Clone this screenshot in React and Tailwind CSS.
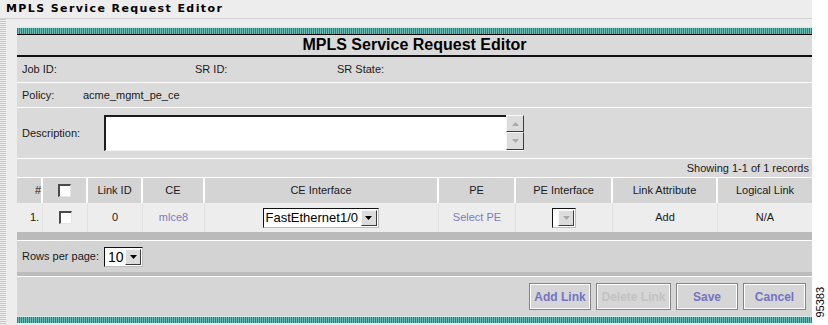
import React from "react";

function Tri({ color = "#000", up = false }) {
  return (
    <svg width="7" height="4" viewBox="0 0 7 4">
      {up ? <path d="M0 4 L3.5 0 L7 4 Z" fill={color} /> : <path d="M0 0 L7 0 L3.5 4 Z" fill={color} />}
    </svg>
  );
}

function ArrowBtn({ disabled = false, up = false, w = "w-[16px]" }) {
  return (
    <div className={`${w} h-full bg-[#dcdcdc] border-t border-l border-t-[#f8f8f8] border-l-[#f8f8f8] border-b border-r border-b-[#3c3c3c] border-r-[#3c3c3c] flex items-center justify-center`}>
      <Tri color={disabled ? "#a9a9a9" : "#000"} up={up} />
    </div>
  );
}

function Check() {
  return (
    <div className="w-[13px] h-[13px] bg-white border-t-2 border-l-2 border-t-[#4a4a4a] border-l-[#4a4a4a] border-b border-r border-b-[#e6e6e6] border-r-[#e6e6e6]" />
  );
}

function Btn({ children, w, disabled = false }) {
  return (
    <div
      className={`${w} h-[27px] border border-[#858585] shadow-[inset_1px_1px_0_#ffffff,inset_-1px_-1px_0_#ffffff] bg-[#d6d6d6] flex items-center justify-center font-bold text-[12px] ${disabled ? "text-[#c2c2c2]" : "text-[#7474c4]"}`}
    >
      {children}
    </div>
  );
}

const cols = "grid grid-cols-[26px_45px_55px_62px_234px_77px_97px_105px_94px]";

export default function App() {
  return (
    <div className="w-[828px] h-[325px] flex bg-white overflow-hidden font-['Liberation_Sans',Arial,sans-serif] text-[11px] text-[#1a1a1a]">
      <div className="w-[812px] h-full bg-[#ededed] flex flex-col">
        <div className="h-[18px] shrink-0 flex items-center pl-[6px] pb-[2px]">
          <span className="font-['DejaVu_Sans',Verdana,sans-serif] font-bold text-[11px] tracking-[1.4px] text-black leading-none">
            MPLS Service Request Editor
          </span>
        </div>
        <div className="h-[1px] shrink-0 bg-[#d2d2d2]" />
        <div className="flex flex-1">
          <div className="w-[6px] bg-[image:repeating-linear-gradient(180deg,#c6c6c6_0_1px,#efefef_1px_2px)]" />
          <div className="ml-[11px] w-[795px] pt-[8px] flex flex-col">
            <div className="h-[1px] bg-[#cfeae7]" />
            <div className="h-[6px] bg-[image:repeating-linear-gradient(90deg,#23857f_0_1px,#6bbab4_1px_2px)]" />
            <div className="h-[1px] bg-black" />
            <div className="h-[20px] bg-[#dadada] flex items-center justify-center text-[16px] font-bold text-black">
              MPLS Service Request Editor
            </div>
            <div className="h-[2px] bg-[#111]" />
            {/* Job row */}
            <div className="h-[25px] bg-[#dadada] grid grid-cols-[173px_142px_1fr] items-center pl-[5px]">
              <span>Job ID:</span>
              <span>SR ID:</span>
              <span>SR State:</span>
            </div>
            <div className="h-[1px] bg-white" />
            {/* Policy */}
            <div className="h-[24px] bg-[#dadada] grid grid-cols-[61px_1fr] items-center pl-[5px]">
              <span>Policy:</span>
              <span>acme_mgmt_pe_ce</span>
            </div>
            <div className="h-[1px] bg-white" />
            {/* Description */}
            <div className="h-[50px] bg-[#dadada] flex items-center pl-[5px]">
              <span className="w-[82px]">Description:</span>
              <div className="flex h-[36px]">
                <div className="w-[402px] h-full bg-white border-t-2 border-l-2 border-t-[#1c1c1c] border-l-[#1c1c1c] border-b border-b-[#f2f2f2]" />
                <div className="w-[18px] h-full flex flex-col bg-white">
                  <div className="h-[17px]"><ArrowBtn disabled up w="w-[18px]" /></div>
                  <div className="h-[18px]"><ArrowBtn disabled w="w-[18px]" /></div>
                </div>
              </div>
            </div>
            <div className="h-[1px] bg-white" />
            {/* Showing */}
            <div className="h-[18px] bg-[#dadada] flex items-center justify-end pr-[3px]">
              Showing 1-1 of 1 records
            </div>
            <div className="h-[1px] bg-white" />
            {/* Table header */}
            <div className={`${cols} h-[25px] bg-[#d4d4d4]`}>
              <div className="flex items-center pl-[18px] border-r-2 border-white">#</div>
              <div className="flex items-center justify-center border-r-2 border-white"><Check /></div>
              <div className="flex items-center justify-center border-r-2 border-white">Link ID</div>
              <div className="flex items-center justify-center border-r-2 border-white">CE</div>
              <div className="flex items-center justify-center border-r-2 border-white">CE Interface</div>
              <div className="flex items-center justify-center border-r-2 border-white">PE</div>
              <div className="flex items-center justify-center border-r-2 border-white">PE Interface</div>
              <div className="flex items-center justify-center border-r-2 border-white">Link Attribute</div>
              <div className="flex items-center justify-center">Logical Link</div>
            </div>
            {/* Data row */}
            <div className={`${cols} h-[29px] bg-[#ededed]`}>
              <div className="flex items-center pl-[13px] border-r border-[#e2e2e2]">1.</div>
              <div className="flex items-center justify-center border-r border-[#e2e2e2]"><Check /></div>
              <div className="flex items-center justify-center border-r border-[#e2e2e2]">0</div>
              <div className="flex items-center justify-center border-r border-[#e2e2e2] text-[#7b7bc0]">mlce8</div>
              <div className="flex items-center justify-center border-r border-[#e2e2e2]">
                <div className="w-[116px] h-[20px] ml-[-2px] bg-white border-t border-l border-t-[#111] border-l-[#111] border-b border-r border-b-[#bdbdbd] border-r-[#bdbdbd] flex">
                  <span className="flex-1 text-[13px] text-black leading-[18px] pl-[2px]">FastEthernet1/0</span>
                  <div className="py-[1px] pr-[1px]"><ArrowBtn /></div>
                </div>
              </div>
              <div className="flex items-center justify-center border-r border-[#e2e2e2] text-[#7b7bc0]">Select PE</div>
              <div className="flex items-center justify-center border-r border-[#e2e2e2]">
                <div className="w-[24px] h-[20px] bg-white border-t border-l border-t-[#111] border-l-[#111] border-b border-r border-b-[#bdbdbd] border-r-[#bdbdbd] flex justify-end">
                  <div className="py-[1px] pr-[1px]"><ArrowBtn disabled /></div>
                </div>
              </div>
              <div className="flex items-center justify-center border-r border-[#e2e2e2]">Add</div>
              <div className="flex items-center justify-center">N/A</div>
            </div>
            <div className="h-[8px] bg-[#bababa]" />
            <div className="h-[1px] bg-white" />
            {/* Rows per page */}
            <div className="h-[31px] bg-[#d3d3d3] flex items-center pl-[5px]">
              <span className="w-[82px]">Rows per page:</span>
              <div className="w-[39px] h-[20px] bg-white border-t border-l border-t-[#111] border-l-[#111] border-b border-r border-b-[#bdbdbd] border-r-[#bdbdbd] flex">
                <span className="flex-1 text-[14px] text-black leading-[18px] pl-[3px]">10</span>
                <div className="py-[1px] pr-[1px]"><ArrowBtn /></div>
              </div>
            </div>
            <div className="h-[4px] bg-[#bcbcbc]" />
            <div className="h-[1px] bg-white" />
            {/* Buttons */}
            <div className="h-[39px] bg-[#d6d6d6] flex items-start justify-end pt-[6px] pr-[6px] gap-[5px]">
              <Btn w="w-[62px]">Add Link</Btn>
              <Btn w="w-[75px]" disabled>Delete Link</Btn>
              <Btn w="w-[62px]">Save</Btn>
              <Btn w="w-[63px]">Cancel</Btn>
            </div>
            <div className="h-[1px] bg-[#cfeae7]" />
            <div className="h-[6px] bg-[image:repeating-linear-gradient(90deg,#23857f_0_1px,#6bbab4_1px_2px)]" />
          </div>
        </div>
      </div>
      <div className="w-[16px] flex items-end justify-center pb-[7px]">
        <span className="[writing-mode:vertical-rl] rotate-180 text-[11px] leading-none text-black">95383</span>
      </div>
    </div>
  );
}
